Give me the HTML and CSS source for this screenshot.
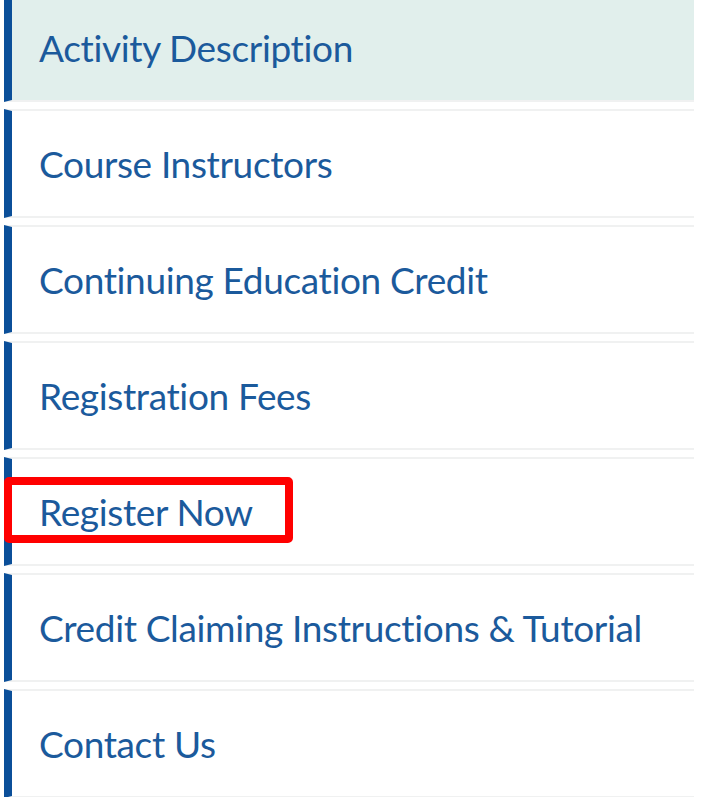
FILE: index.html
```html
<!DOCTYPE html>
<html lang="en">
<head>
<meta charset="utf-8">
<title>Activity Menu</title>
<link rel="stylesheet" href="styles.css">
</head>
<body>
<ul class="menu">
  <li class="item active"><a class="link" href="#">Activity Description</a></li>
  <li class="item"><a class="link" href="#">Course Instructors</a></li>
  <li class="item"><a class="link" href="#">Continuing Education Credit</a></li>
  <li class="item"><a class="link" href="#">Registration Fees</a></li>
  <li class="item"><a class="link" href="#">Register Now</a><span class="highlight-box"></span></li>
  <li class="item"><a class="link" href="#">Credit Claiming Instructions &amp; Tutorial</a></li>
  <li class="item"><a class="link" href="#">Contact Us</a></li>
</ul>
</body>
</html>
```
FILE: styles.css
```css
html, body {
  margin: 0;
  padding: 0;
  background: #ffffff;
  overflow: hidden;
}

body {
  font-family: Lato, "Open Sans", sans-serif;
}

.menu {
  list-style: none;
  margin: -7px 7px 0 4px;
  padding: 0;
  display: flex;
  flex-direction: column;
  gap: 7px;
}

.item {
  position: relative;
  box-sizing: border-box;
  height: 109px;
  display: flex;
  align-items: center;
  border-left: 8px solid #0b4f99;
  border-top: 2px solid #f0f1f1;
  border-bottom: 2px solid #f0f1f1;
  padding-left: 27px;
  background: #ffffff;
}

.item.active {
  background: #e1efec;
}

.link {
  color: #1b5a9c;
  text-decoration: none;
  font-size: 37px;
  line-height: 45px;
  letter-spacing: -0.35px;
}

.highlight-box {
  position: absolute;
  left: -8px;
  top: 18px;
  width: 289px;
  height: 66px;
  box-sizing: border-box;
  border: 8px solid #ff0000;
  border-radius: 5px;
}
```
